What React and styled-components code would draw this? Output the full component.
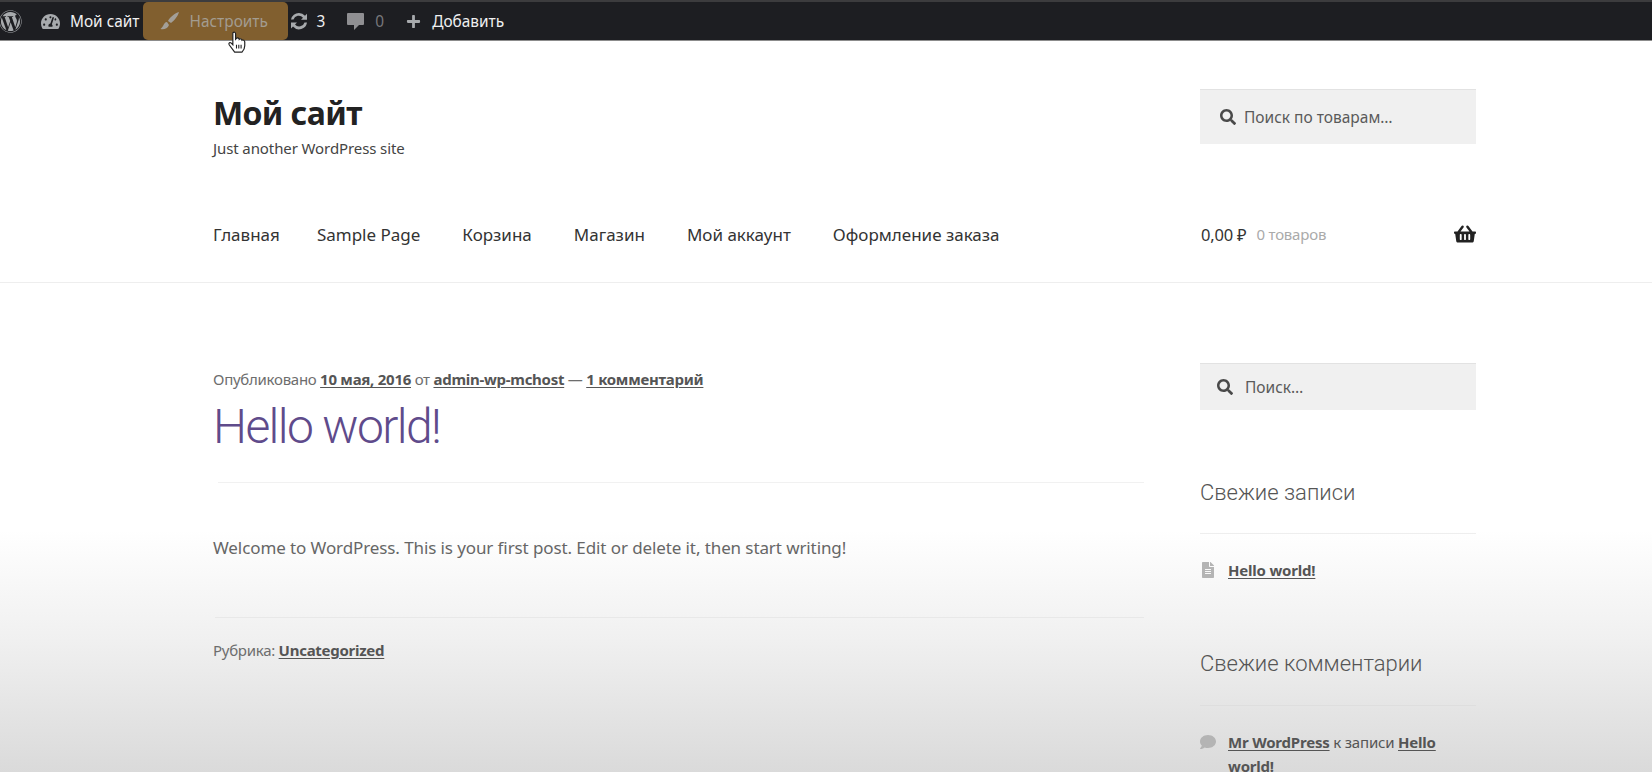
import React from "react";
import styled, { createGlobalStyle } from "styled-components";
import {
  FaWordpress,
  FaTachometerAlt,
  FaPlus,
  FaSearch,
  FaShoppingBasket,
  FaFileAlt,
  FaComment,
} from "react-icons/fa";

const GlobalStyle = createGlobalStyle`
  html, body {
    margin: 0;
    padding: 0;
    height: 772px;
    overflow: hidden;
    font-family: "Noto Sans", "Open Sans", sans-serif;
  }
`;

const Page = styled.div`
  width: 1652px;
  height: 772px;
  overflow: hidden;
  display: flex;
  flex-direction: column;
  background: linear-gradient(#fff 0, #fff 530px, #f0f0f0 640px, #dadada 772px);
  color: #555;
`;

const TopBar = styled.div`
  height: 38px;
  flex: none;
  box-sizing: content-box;
  border-top: 2px solid #3c3c3e;
  border-bottom: 1px solid #8c8c8c;
  background: #1d1e22;
  display: flex;
  align-items: center;
  position: relative;
  color: #f0f0f1;
  font-size: 15.4px;
`;

const BarIcon = styled.span`
  display: flex;
  align-items: center;
  justify-content: center;
  color: ${(p) => p.color || "#a7aaad"};
  font-size: ${(p) => p.size || 20}px;
  margin-left: ${(p) => p.left || 0}px;
  margin-right: ${(p) => p.right || 0}px;
`;

const BarText = styled.span`
  color: ${(p) => p.color || "#f0f0f1"};
  margin-right: ${(p) => p.right || 0}px;
  white-space: nowrap;
`;

const Highlight = styled.div`
  width: 145px;
  height: 38px;
  margin-right: 1px;
  margin-left: 3px;
  padding-left: 17px;
  box-sizing: border-box;
  background: #815f2f;
  border-radius: 5px;
  display: flex;
  align-items: center;
  gap: 10px;
  color: #a39c90;
`;

const Cursor = styled.svg`
  position: absolute;
  left: 227px;
  top: 29px;
`;

const Wrap = styled.div`
  padding: 0 176px 0 213px;
`;

const Masthead = styled(Wrap)`
  height: 242px;
  flex: none;
  box-sizing: border-box;
  border-bottom: 1px solid #eeeeee;
  background: #fff;
`;

const HeaderTop = styled.div`
  display: flex;
  justify-content: space-between;
  padding-top: 48px;
  height: 171px;
  box-sizing: border-box;
`;

const Brand = styled.div`
  padding-top: 1px;
`;

const SiteTitle = styled.div`
  font-size: 32px;
  line-height: 46px;
  font-weight: 700;
  color: #222;
  letter-spacing: -0.6px;
`;

const Tagline = styled.div`
  font-size: 15px;
  line-height: 20px;
  margin-top: 2px;
  color: #444;
  letter-spacing: -0.1px;
`;

const SearchBox = styled.div`
  width: 276px;
  height: ${(p) => p.height}px;
  box-sizing: border-box;
  background: #f0f0f0;
  border-top: 1px solid #e2e2e2;
  display: flex;
  align-items: center;
  padding-left: ${(p) => p.pad}px;
  gap: ${(p) => p.gap}px;
  color: #5a5a5a;
  font-size: 15.5px;
  svg {
    color: #4a4a4a;
  }
`;

const NavRow = styled.div`
  display: flex;
  justify-content: space-between;
  align-items: center;
  height: 44px;
`;

const NavList = styled.div`
  display: flex;
  gap: 42px;
  font-size: 17px;
  color: #333;
  span:first-child {
    margin-right: -5px;
  }
`;

const Cart = styled.div`
  width: 275px;
  margin-left: 1px;
  display: flex;
  align-items: center;
  font-size: 16.500px;
  color: #333;
  letter-spacing: -0.2px;
  svg {
    margin-left: auto;
    color: #222;
  }
`;

const CartCount = styled.span`
  font-size: 15px;
  color: #aaa;
  margin-left: 10px;
`;

const Columns = styled(Wrap)`
  display: flex;
  justify-content: space-between;
  padding-top: 81px;
`;

const Primary = styled.div`
  width: 931px;
  padding-top: 3px;
`;

const Meta = styled.div`
  font-size: 15px;
  line-height: 24px;
  letter-spacing: -0.27px;
  color: #6d6d6d;
`;

const BoldLink = styled.a`
  font-weight: 700;
  color: #555;
  text-decoration: underline;
  text-underline-offset: 2px;
`;

const PostTitle = styled.h1`
  margin: 7px 0 0;
  font-family: Roboto, "Noto Sans", sans-serif;
  font-weight: 300;
  font-size: 48px;
  line-height: 58px;
  letter-spacing: -1.6px;
  color: #5f4b8b;
`;

const Rule = styled.div`
  height: 1px;
  background: ${(p) => p.color || "#f1f1f1"};
  margin: ${(p) => p.top}px 0 ${(p) => p.bottom}px ${(p) => p.left || 0}px;
`;

const Body = styled.p`
  margin: 0;
  font-size: 17px;
  line-height: 28px;
  letter-spacing: -0.1px;
  color: #666;
`;

const Sidebar = styled.div`
  width: 276px;
  margin-top: -1px;
`;

const WidgetTitle = styled.div`
  font-family: Roboto, "Noto Sans", sans-serif;
  font-weight: 300;
  font-size: 22px;
  line-height: 30px;
  color: #555;
  margin-top: ${(p) => p.top}px;
`;

const WidgetRow = styled.div`
  display: flex;
  gap: 12px;
  font-size: 15px;
  line-height: 24px;
  letter-spacing: -0.2px;
  svg {
    flex: none;
    margin-top: 4px;
    color: #b4b4b4;
  }
`;

function Hand() {
  return (
    <Cursor width="19" height="22" viewBox="0 0 20 24">
      <path
        d="M6 2c1 -1 3 -1 3 1v6l1 -1c1 -1 3 0 3 1c1 -1 3 0 3 1c1 -.5 3 0 3 2v4c0 3 -2 6 -3 7H8l-6 -8c-1 -2 1 -3 2 -2l2 2V3z"
        fill="#fff"
        stroke="#222"
        strokeWidth="1.3"
      />
      <path d="M10 15v4M12.5 15v4M15 15v4" stroke="#222" strokeWidth="1.2" />
    </Cursor>
  );
}

function App() {
  return (
    <Page>
      <GlobalStyle />
      <TopBar>
        <BarIcon size={23} left={-1} right={19}>
          <FaWordpress />
        </BarIcon>
        <BarIcon size={19} right={10}>
          <FaTachometerAlt />
        </BarIcon>
        <BarText>Мой сайт</BarText>
        <Highlight>
          <svg width="20" height="20" viewBox="0 0 20 20">
            <path d="M19 1c-4 1 -9 5 -11 9l3 2c3 -2 7 -7 8 -11zM7 11c-2 0 -3 2 -4 4c-.5 1 -1.500 2 -2.500 3c3 1 7 0 8.500 -4z" fill="#a39f98" />
          </svg>
          <span>Настроить</span>
        </Highlight>
        <BarIcon size={20} right={8}>
          <svg width="20" height="20" viewBox="0 0 20 20">
            <path d="M10 2a8 8 0 0 1 6 2.700l2 -2v6h-6l2 -2a5.500 5.500 0 0 0 -9.500 1.800H2a8 8 0 0 1 8 -6.500zM18 11.500a8 8 0 0 1 -14 4l-2 2v-6h6l-2 2a5.500 5.500 0 0 0 9.500 -2z" fill="#a7aaad" />
          </svg>
        </BarIcon>
        <BarText right={22}>3</BarText>
        <BarIcon right={10}>
          <svg width="18" height="20" viewBox="0 0 18 20">
            <path d="M1 2h15a1 1 0 0 1 1 1v10a1 1 0 0 1 -1 1h-4l-5 5v-5H1a1 1 0 0 1 -1 -1V3a1 1 0 0 1 1 -1z" fill="#8f8f92" />
          </svg>
        </BarIcon>
        <BarText color="#77777b" right={22}>0</BarText>
        <BarIcon size={15} right={11}>
          <FaPlus />
        </BarIcon>
        <BarText>Добавить</BarText>
        <Hand />
      </TopBar>

      <Masthead>
        <HeaderTop>
          <Brand>
            <SiteTitle>Мой сайт</SiteTitle>
            <Tagline>Just another WordPress site</Tagline>
          </Brand>
          <SearchBox height={55} pad={20} gap={8}>
            <FaSearch size={16} />
            <span>Поиск по товарам…</span>
          </SearchBox>
        </HeaderTop>
        <NavRow>
          <NavList>
            <span>Главная</span>
            <span>Sample Page</span>
            <span>Корзина</span>
            <span>Магазин</span>
            <span>Мой аккаунт</span>
            <span>Оформление заказа</span>
          </NavList>
          <Cart>
            <span>0,00 ₽</span>
            <CartCount>0 товаров</CartCount>
            <FaShoppingBasket size={22} />
          </Cart>
        </NavRow>
      </Masthead>

      <Columns>
        <Primary>
          <Meta>
            Опубликовано <BoldLink>10 мая, 2016</BoldLink> от{" "}
            <BoldLink>admin-wp-mchost</BoldLink> — <BoldLink>1 комментарий</BoldLink>
          </Meta>
          <PostTitle>Hello world!</PostTitle>
          <Rule top={26} bottom={51} left={5} />
          <Body>Welcome to WordPress. This is your first post. Edit or delete it, then start writing!</Body>
          <Rule top={55} bottom={20} left={2} color="#e8e8e8" />
          <Meta>
            Рубрика: <BoldLink>Uncategorized</BoldLink>
          </Meta>
        </Primary>
        <Sidebar>
          <SearchBox height={47} pad={17} gap={12}>
            <FaSearch size={16} />
            <span>Поиск…</span>
          </SearchBox>
          <WidgetTitle top={68}>Свежие записи</WidgetTitle>
          <Rule top={25} bottom={24} color="#eeeeee" />
          <WidgetRow>
            <FaFileAlt size={16} />
            <BoldLink>Hello world!</BoldLink>
          </WidgetRow>
          <WidgetTitle top={67}>Свежие комментарии</WidgetTitle>
          <Rule top={26} bottom={24} color="#dedede" />
          <WidgetRow>
            <FaComment size={16} />
            <span>
              <BoldLink>Mr WordPress</BoldLink> к записи <BoldLink>Hello world!</BoldLink>
            </span>
          </WidgetRow>
        </Sidebar>
      </Columns>
    </Page>
  );
}

export default App;
